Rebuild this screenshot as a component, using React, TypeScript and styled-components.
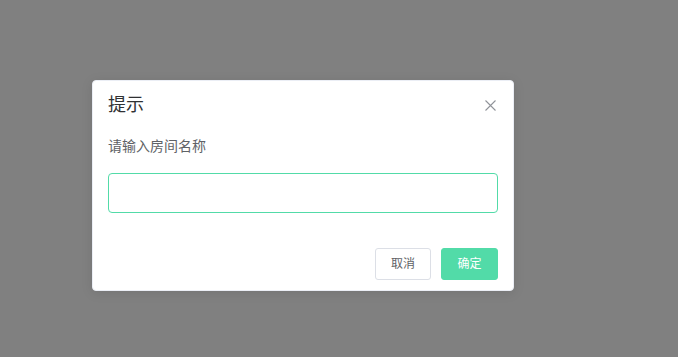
import React, { useState } from 'react';
import styled, { createGlobalStyle } from 'styled-components';

const GlobalStyle = createGlobalStyle`
  html, body {
    margin: 0;
    padding: 0;
    background-color: #808080;
    font-family: "Helvetica Neue", "Liberation Sans", "Noto Sans CJK SC", sans-serif;
  }
  * {
    box-sizing: border-box;
  }
`;

const Overlay = styled.div`
  min-height: 100vh;
  padding: 80px 0 0 92px;
`;

const MessageBox = styled.div`
  width: 422px;
  padding-bottom: 10px;
  background-color: #fff;
  border: 1px solid #ebeef5;
  border-radius: 4px;
  box-shadow: 0 2px 12px rgba(0, 0, 0, 0.1);
  font-size: 18px;
`;

const Header = styled.div`
  display: flex;
  justify-content: space-between;
  align-items: flex-start;
  padding: 15px 15px 10px;
`;

const Title = styled.span`
  font-size: 18px;
  line-height: 18px;
  color: #303133;
`;

const CloseButton = styled.button`
  width: 16px;
  height: 16px;
  margin-top: 1px;
  padding: 0;
  border: none;
  background: transparent;
  cursor: pointer;
  display: flex;
  align-items: center;
  justify-content: center;
  color: #909399;
`;

const Content = styled.div`
  padding: 10px 15px;
  font-size: 14px;
  color: #606266;
`;

const Message = styled.p`
  margin: 0;
  line-height: 24px;
`;

const InputWrap = styled.div`
  padding-top: 15px;
`;

const Input = styled.input`
  display: block;
  width: 100%;
  height: 40px;
  padding: 0 15px;
  border: 1px solid #52dba8;
  border-radius: 4px;
  outline: none;
  font-size: 14px;
  color: #606266;
  font-family: inherit;
`;

const ErrorMsg = styled.div`
  min-height: 18px;
  margin-top: 2px;
  font-size: 12px;
  color: #f56c6c;
`;

const Buttons = styled.div`
  display: flex;
  justify-content: flex-end;
  gap: 10px;
  padding: 5px 15px 0;
`;

const Button = styled.button<{ $primary?: boolean }>`
  height: 32px;
  min-width: ${p => (p.$primary ? '57px' : '56px')};
  padding: 0 15px;
  border-radius: 3px;
  font-size: 12px;
  line-height: 1;
  font-family: inherit;
  cursor: pointer;
  border: 1px solid ${p => (p.$primary ? '#52dba8' : '#dcdfe6')};
  background-color: ${p => (p.$primary ? '#52dba8' : '#fff')};
  color: ${p => (p.$primary ? '#fff' : '#606266')};
`;

const App: React.FC = () => {
  const [roomName, setRoomName] = useState('');

  return (
    <>
      <GlobalStyle />
      <Overlay>
        <MessageBox>
          <Header>
            <Title>提示</Title>
            <CloseButton aria-label="Close">
              <svg width="11" height="11" viewBox="0 0 11 11">
                <path d="M0.5 0.5 L10.5 10.5 M10.5 0.5 L0.5 10.5" stroke="currentColor" strokeWidth="1.1" fill="none" />
              </svg>
            </CloseButton>
          </Header>
          <Content>
            <Message>请输入房间名称</Message>
            <InputWrap>
              <Input value={roomName} onChange={e => setRoomName(e.target.value)} />
              <ErrorMsg />
            </InputWrap>
          </Content>
          <Buttons>
            <Button>取消</Button>
            <Button $primary>确定</Button>
          </Buttons>
        </MessageBox>
      </Overlay>
    </>
  );
};

export default App;
